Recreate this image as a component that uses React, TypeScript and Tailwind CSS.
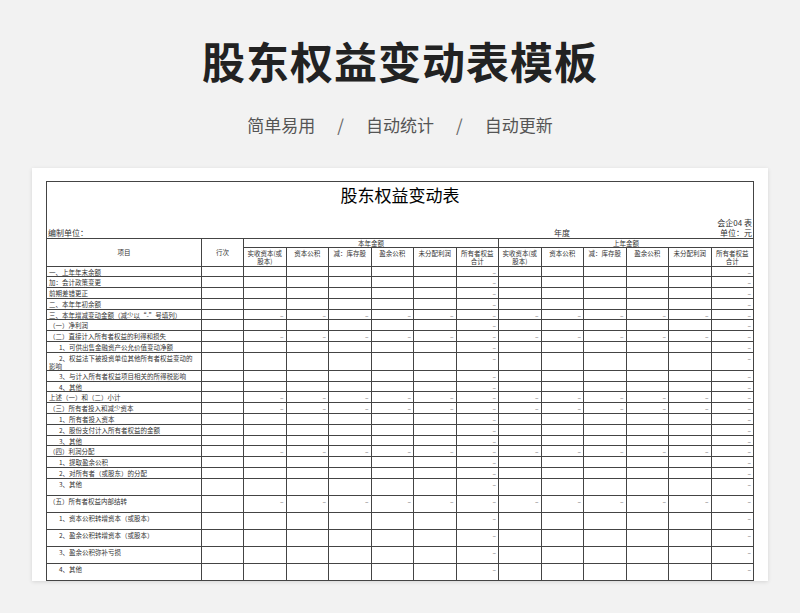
const COLS = ['实收资本(或股本)', '资本公积', '减：库存股', '盈余公积', '未分配利润', '所有者权益合计']

// all: every data column has a dash; otherwise only the two totals
const ROWS: { label: string; all?: boolean; h?: number; indent?: boolean }[] = [
  { label: '一、上年年末余额' },
  { label: '加：会计政策变更' },
  { label: '前期差错更正' },
  { label: '二、本年年初余额' },
  { label: '三、本年增减变动金额（减少以“-”号填列）', all: true },
  { label: '（一）净利润' },
  { label: '（二）直接计入所有者权益的利得和损失', all: true },
  { label: '1、可供出售金融资产公允价值变动净额', indent: true },
  { label: '2、权益法下被投资单位其他所有者权益变动的影响', indent: true, h: 18 },
  { label: '3、与计入所有者权益项目相关的所得税影响', indent: true },
  { label: '4、其他', indent: true },
  { label: '上述（一）和（二）小计', all: true },
  { label: '（三）所有者投入和减少资本', all: true },
  { label: '1、所有者投入资本', indent: true },
  { label: '2、股份支付计入所有者权益的金额', indent: true },
  { label: '3、其他', indent: true },
  { label: '（四）利润分配', all: true },
  { label: '1、提取盈余公积', indent: true },
  { label: '2、对所有者（或股东）的分配', indent: true },
  { label: '3、其他', indent: true, h: 17 },
  { label: '（五）所有者权益内部结转', all: true, h: 17 },
  { label: '1、资本公积转增资本（或股本）', indent: true, h: 17 },
  { label: '2、盈余公积转增资本（或股本）', indent: true, h: 17 },
  { label: '3、盈余公积弥补亏损', indent: true, h: 17 },
  { label: '4、其他', indent: true, h: 17 },
]

const cell = 'border border-[#444] px-[2px] leading-[8px]'

export default function App() {
  return (
    <div
      className="w-[800px] h-[613px] bg-[#f2f2f2] flex flex-col items-center overflow-hidden"
      style={{ fontFamily: '"Noto Sans CJK SC", sans-serif' }}
    >
      <h1 className="mt-[34px] text-[43px] leading-[52px] font-bold text-[#222] tracking-[1px]">股东权益变动表模板</h1>
      <div className="mt-[26px] flex items-center gap-[22px] text-[17px] text-[#555]">
        <span>简单易用</span>
        <span className="text-[#666]">/</span>
        <span>自动统计</span>
        <span className="text-[#666]">/</span>
        <span>自动更新</span>
      </div>

      <div className="mt-[30px] w-[736px] h-[413px] bg-white shadow-[0_1px_4px_rgba(0,0,0,0.12)] pt-[13px] px-[14px] overflow-hidden">
        <div
          className="border-x border-t border-[#444] text-[#333]"
          style={{ fontFamily: '"Noto Sans CJK SC", serif' }}
        >
          <div className="h-[36px] flex items-start justify-center pt-[1px] text-[17px] leading-[24px] text-black">
            股东权益变动表
          </div>
          <div className="text-right text-[8px] leading-[10px] pr-[1px]">会企04 表</div>
          <div className="flex text-[8px] leading-[10px] px-[1px]">
            <span className="flex-1">编制单位：</span>
            <span className="w-[166px]">年度</span>
            <span>单位：元</span>
          </div>
        </div>
        <table className="table-fixed border-collapse w-[708px] text-[6.5px] text-[#333]">
          <colgroup>
            <col className="w-[155px]" />
            <col className="w-[42px]" />
            {Array.from({ length: 12 }).map((_, i) => (
              <col key={i} />
            ))}
          </colgroup>
          <thead>
            <tr className="h-[8px]">
              <th rowSpan={2} className={cell + ' font-normal'}>项目</th>
              <th rowSpan={2} className={cell + ' font-normal'}>行次</th>
              <th colSpan={6} className={cell + ' font-normal'}>本年金额</th>
              <th colSpan={6} className={cell + ' font-normal'}>上年金额</th>
            </tr>
            <tr className="h-[19px]">
              {[...COLS, ...COLS].map((c, i) => (
                <th key={i} className={cell + ' font-normal align-top pt-[1px]'}>{c}</th>
              ))}
            </tr>
          </thead>
          <tbody>
            {ROWS.map((r, i) => (
              <tr key={i} style={{ height: r.h ?? 10.8 }}>
                <td className={cell + ' text-left align-top pt-[1px]' + (r.indent ? ' indent-[10px]' : '')}>{r.label}</td>
                <td className={cell}></td>
                {Array.from({ length: 12 }).map((_, j) => (
                  <td key={j} className={cell + ' text-right text-[#555] align-top pt-[1px]'}>
                    {r.all || j === 5 || j === 11 ? '–' : ''}
                  </td>
                ))}
              </tr>
            ))}
          </tbody>
        </table>
      </div>
    </div>
  )
}
